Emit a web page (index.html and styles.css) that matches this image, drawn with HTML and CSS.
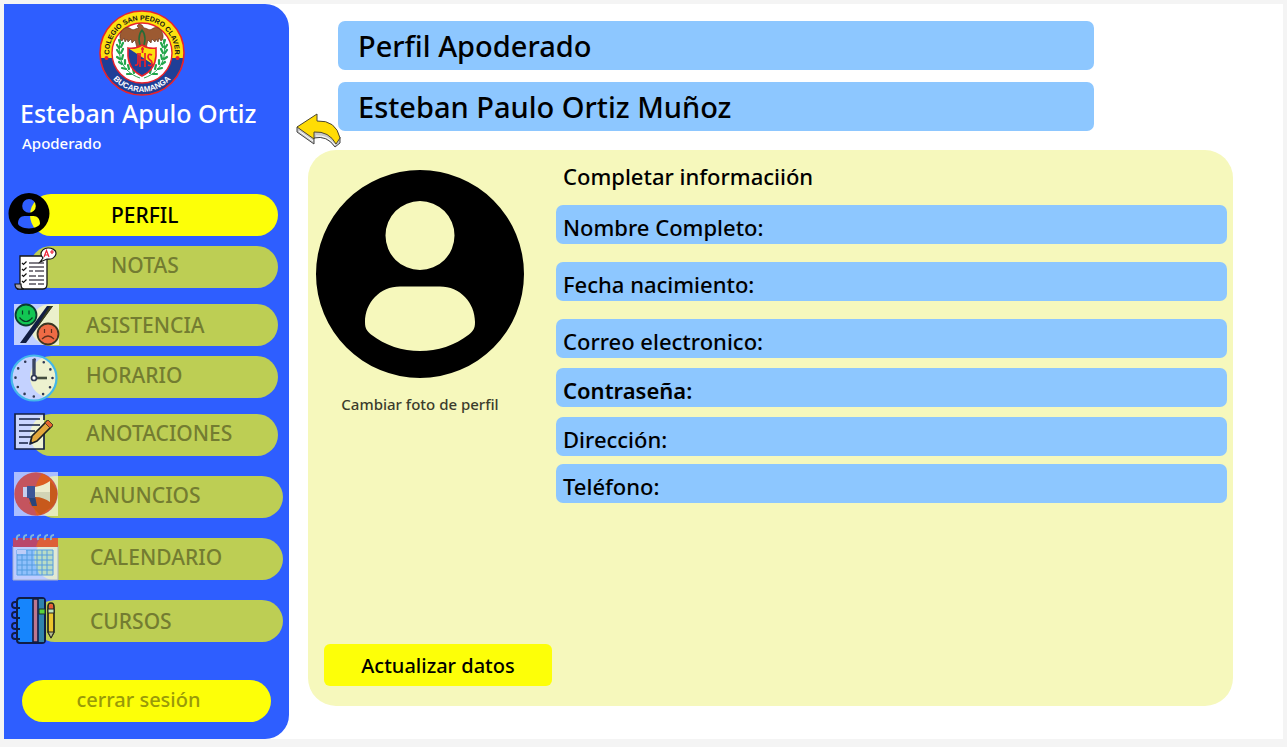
FILE: index.html
```html
<!DOCTYPE html>
<html lang="es">
<head>
<meta charset="utf-8">
<meta name="viewport" content="width=device-width, initial-scale=1">
<title>Perfil Apoderado</title>
<link rel="stylesheet" href="styles.css">
</head>
<body>
<div class="sheet">
  <aside class="sidebar">
    <svg class="crest" viewBox="0 0 86 86" role="img" aria-label="Colegio San Pedro Claver">
      <circle cx="43" cy="43" r="42" fill="#fde00f"/>
      <path d="M1.300 48A42 42 0 0 0 84.700 48z" fill="#1f3f97"/>
      <circle cx="43" cy="43" r="42" fill="none" stroke="#e9222b" stroke-width="1.6"/>
      <circle cx="43" cy="43" r="30" fill="#fff" stroke="#e9222b" stroke-width="1.4"/>
      <circle cx="7.500" cy="48" r="2" fill="#e9222b"/><circle cx="78.500" cy="48" r="2" fill="#e9222b"/>
      <path id="arc-top" d="M11.200 51a32.800 32.800 0 1 1 63.600 0" fill="none"/>
      <path id="arc-bottom" d="M4 43a39 39 0 0 0 78 0" fill="none"/>
      <text class="crest-top"><textPath href="#arc-top" startOffset="50%">COLEGIO SAN PEDRO CLAVER</textPath></text>
      <text class="crest-bottom"><textPath href="#arc-bottom" startOffset="50%">BUCARAMANGA</textPath></text>
      <g fill="none" stroke="#22a64b" stroke-width="1">
        <path d="M22 29C17 45 23 62 41 68M64 29C69 45 63 62 45 68"/>
        <path stroke-width="2.200" stroke-linecap="round" d="M21 33l-1-3M20 38l-2-3M20 43l-2-3M21 49l-3-2M23 54l-3-2M27 59l-4-1M32 64l-4 0M22 37l2-4M22 43l2-4M23 49l1-4M26 54l0-4M30 59l-1-4M35 63l-1-4M65 33l1-3M66 38l2-3M66 43l2-3M65 49l3-2M63 54l3-2M59 59l4-1M54 64l4 0M64 37l-2-4M64 43l-2-4M63 49l-1-4M60 54l0-4M56 59l1-4M51 63l1-4"/>
      </g>
      <path d="M40 18c-3 0-5 3-8 1-4-3-8-1-10 3-2 4-1 8 1 9l2-3 1 4 2-3 1 3 3-3 1 4 3-3 2 8h9l2-8 3 3 1-4 3 3 1-3 2 3 1-4 2 3c2-1 3-5 1-9-2-4-6-6-10-3-3 2-5-1-8-1l-2-3-3-1-2 2z" fill="#9c5a32" stroke="#5b2e1a" stroke-width=".6"/>
      <path d="M43 20c-4 5-4 13 0 18 4-5 4-13 0-18z" fill="none" stroke="#256c37" stroke-width="1.500"/>
      <path d="M29 38q8 1 14-3 6 4 14 3v8q-1 14-14 20-13-6-14-20z" fill="#fde00f"/>
      <path d="M29 38l26 17q-4 8-12 11-13-6-14-20z" fill="#1f3f97"/>
      <path d="M29 38q8 1 14-3 6 4 14 3v8q-1 14-14 20-13-6-14-20z" fill="none" stroke="#e9222b" stroke-width="1.600"/>
      <path d="M39 43v9q0 4-3 3M41 43v14M41 50h5M46 43v14M43.500 37v6M42 39h3M53 45q-4-2-4 2 0 2 2 3t2 3q0 4-4 2" fill="none" stroke="#e9222b" stroke-width="1.700"/>
    </svg>
    <p class="user-name">Esteban Apulo Ortiz</p>
    <p class="user-role">Apoderado</p>

    <nav aria-label="Principal">
      <ul class="menu">
        <li class="item item-short">
          <a class="pill pill-active pill-centered" href="#perfil" aria-current="page">PERFIL</a>
          <svg class="icon" viewBox="0 1 48 48" aria-hidden="true"><path fill-rule="evenodd" d="M23 4a20.500 20.500 0 1 0 0 41 20.500 20.500 0 0 0 0-41zM23 10.100a6.800 6.800 0 1 1 0 13.600 6.800 6.800 0 0 1 0-13.600zM18.500 27h9c4 0 6.500 3 6.500 7.500 0 2-5 5-11 5s-11-3-11-5c0-4.500 2.500-7.500 6.500-7.500z"/></svg>
        </li>
        <li class="item item-short">
          <a class="pill" href="#notas">NOTAS</a>
          <svg class="icon" viewBox="-1 -6 48 48" aria-hidden="true">
            <path d="M13 11h27v28q0 5-4 5H10q3-1 3-5z" transform="translate(0 -3)" fill="#fff" stroke="#151515" stroke-width="1.300"/>
            <path d="M8 36h6q0 5 3 5h-5q-4 0-4-5z" fill="#a8a5ae" stroke="#151515" stroke-width="1.200"/>
            <path d="M22 15h15M22 19h15M22 23h4M28 23h9M22 28h7M31 28h6M22 32h15M22 36h7M31 36h6" stroke="#55525c" stroke-width="1.300"/>
            <path d="M15 15l1.500 1.500 3-3M15 21l1.500 1.500 3-3M15 27l1.500 1.500 3-3M15 33l1.500 1.500 3-3" fill="none" stroke="#111" stroke-width="1.200"/>
            <path d="M36 10l-3 4 7-3c5 1 9-2 9-6 0-3-4-5-8-5s-7 3-7 6q0 2 2 4z" fill="#fff" stroke="#151515" stroke-width="1.200"/>
            <path d="M37 9l2.500-6.500L42 9M38 7h3M43 4h4M45 2v4" fill="none" stroke="#ee2236" stroke-width="1.200"/>
          </svg>
        </li>
        <li class="item gap-medium">
          <a class="pill pill-centered" href="#asistencia">ASISTENCIA</a>
          <svg class="icon" viewBox="-3 -1 48 48" aria-hidden="true">
            <path fill="#fff" opacity=".7" d="M5 3h45v41H5z"/>
            <path d="M11 42L38 5h6L17 42z" fill="#111d42"/>
            <path d="M27 27L41 5h3L28 27z" fill="#383d1b"/>
            <circle cx="17" cy="14" r="10.500" fill="#12c653" stroke="#0b3d30" stroke-width="1.800"/>
            <path d="M13.500 9.500v4M20 9.500v4M10.500 16.500q6.500 8 13 0" fill="none" stroke="#073d25" stroke-width="1.200"/>
            <circle cx="39" cy="33" r="10.500" fill="#ef6b45" stroke="#3b3522" stroke-width="1.800"/>
            <path d="M35.500 28v4M42.500 28v4M33 38q6-6 12 0" fill="none" stroke="#61301e" stroke-width="1.200"/>
          </svg>
        </li>
        <li class="item gap-small">
          <a class="pill" href="#horario">HORARIO</a>
          <svg class="icon" viewBox="-3 -1 48 48" aria-hidden="true">
            <circle cx="25" cy="25" r="22.500" fill="#fff" fill-opacity=".72" stroke="#44b7ea" stroke-width="2.200"/>
            <circle cx="25" cy="25" r="18.500" fill="none" stroke="#303853" stroke-width="2.600" stroke-linecap="round" stroke-dasharray="0 9.687"/>
            <path d="M25 6v17" stroke="#3b4663" stroke-width="3.400"/>
            <path d="M27 25h11" stroke="#454d3e" stroke-width="2.600"/>
            <circle cx="25" cy="25" r="2.500" fill="#fff" stroke="#303853" stroke-width="1.700"/>
          </svg>
        </li>
        <li class="item gap-medium">
          <a class="pill" href="#anotaciones">ANOTACIONES</a>
          <svg class="icon" viewBox="-3 -2 48 48" aria-hidden="true">
            <path d="M6 2h29v35H6z" fill="#fff" fill-opacity=".75"/>
            <path d="M35 22v15H6V2h29v6" fill="none" stroke="#142044" stroke-width="1.700"/>
            <path d="M10 7h21M10 13h21M10 19h16M10 25h12M10 31h9" stroke="#142044" stroke-width="1.700"/>
            <path d="M23 24L38 9l5 5-15 15-7 3z" fill="#e3a83d" stroke="#1e2021" stroke-width="1.700" stroke-linejoin="round"/>
            <path d="M36 11l3-3 5 5-3 3z" fill="#e6642f" stroke="#553d24"/><path d="M21 32l1-3 2 2z" fill="#142044"/>
          </svg>
        </li>
        <li class="item item-long gap-large">
          <a class="pill" href="#anuncios">ANUNCIOS</a>
          <svg class="icon" viewBox="0 0 48 48" aria-hidden="true">
            <path fill="#fff" opacity=".6" d="M5 0h44v44H5z"/>
            <circle cx="27" cy="22" r="21.700" fill="#c4545e"/>
            <path d="M33 1.500a21.700 21.700 0 0 1-5 42c-6-10-4-30 5-42z" fill="#dc5e22"/>
            <path d="M42 10l6 8q1 10-4 16L31 43l-11-12z" fill="#c7591c"/>
            <path d="M19 24h7l2 10h-5z" fill="#27457a"/>
            <path d="M14 15h6v10h-6z" fill="#c5cfee"/><path d="M18 14h8v12h-8z" fill="#3c5697"/>
            <path d="M26 15c6-1 11-3 15-6v11H26z" fill="#ececcd"/><path d="M26 20h15v10c-4-3-9-5-15-5z" fill="#d2d4b6"/>
          </svg>
        </li>
        <li class="item item-long gap-large">
          <a class="pill" href="#calendario">CALENDARIO</a>
          <svg class="icon" viewBox="0 -3 48 48" aria-hidden="true">
            <path d="M4 9h45v34H4z" fill="#eef2ff" fill-opacity=".75" stroke="#a5aecd"/>
            <path d="M4 1h45v9H4z" fill="#b9476d"/><path d="M31 1h18v9H27q1-5 4-9z" fill="#dd5f37"/>
            <path d="M8 13h36v25H8z" fill="#8fc0fb"/><path d="M26 13h18v25H31q-8-12-5-25z" fill="#b9dcc6"/>
            <path d="M8 13h36v25H8zM8 18h36M8 23h36M8 28h36M8 33h36M13 13v25M18 13v25M23 13v25M28 13v25M33 13v25M38 13v25" fill="none" stroke="#559ce0" stroke-width="1"/>
            <path d="M8 13h9v4H8z" fill="#bdcdf8"/>
            <path d="M8 3q-1-5 3-5M15 3q-1-5 3-5M22 3q-1-5 3-5M29 3q-1-5 3-5M36 3q-1-5 3-5M42 3q-1-5 3-5" fill="none" stroke="#80b6dc" stroke-width="2"/>
          </svg>
        </li>
        <li class="item item-long gap-large">
          <a class="pill pill-centered" href="#cursos">CURSOS</a>
          <svg class="icon" viewBox="-1 -5 48 48" aria-hidden="true">
            <path d="M10-3h22q3 0 3 3v39q0 3-3 3H10q-3 0-3-3V0q0-3 3-3z" fill="#1685fc" stroke="#101d45" stroke-width="2"/>
            <path d="M29-2h5v43h-5z" fill="#2f83ad"/>
            <path d="M23-2h5v43h-5z" fill="#bc7790" stroke="#101d45" stroke-width="1.600"/>
            <path d="M29 8h6v5h-6z" fill="#58d33c" stroke="#1c3428"/>
            <path d="M10 7H5q-3 0-3-3t3-3h2M10 17H5q-3 0-3-3t3-3h2M10 28H5q-3 0-3-3t3-3h2M10 38H5q-3 0-3-3t3-3h2" fill="none" stroke="#101d45" stroke-width="1.900"/>
            <path d="M38 6q0-4 3-4t3 4v25l-3 5-3-5z" fill="#edc52d" stroke="#24251f" stroke-width="1.700"/>
            <path d="M39 8V5q0-2 2-2t2 2v3z" fill="#e95b38"/><path d="M38 8h6v4h-6z" fill="#bde3bd" stroke="#24251f"/>
            <path d="M38 31h6l-3 6z" fill="#b8bd8b" stroke="#24251f"/>
          </svg>
        </li>
      </ul>
    </nav>
    <button class="logout" type="button">cerrar sesión</button>
  </aside>

  <main class="content">
    <header class="headings">
      <h1 class="banner">Perfil Apoderado</h1>
      <h2 class="banner">Esteban Paulo Ortiz Muñoz</h2>
      <button class="back" type="button" aria-label="Volver">
        <svg viewBox="0 0 46 36" aria-hidden="true">
          <path d="M1 14v5l17 12v-6q13-3 21 9l5-4v-6L20 12z" fill="#c9c9c9" stroke="#444" stroke-width="1"/>
          <path d="M3 18l14 10M20 23q12-1 19 9" fill="none" stroke="#fff" stroke-width="1"/>
          <path d="M1 14L21 1v7q19-1 23 17l-4 6Q33 18 18 19v7z" fill="#ffdc05" stroke="#4c4630" stroke-width="1" stroke-linejoin="round"/>
        </svg>
      </button>
    </header>

    <form class="panel">
      <div class="photo">
        <svg class="avatar" viewBox="0 0 208 208" role="img" aria-label="Foto de perfil"><path fill-rule="evenodd" d="M104 0a104 104 0 1 0 0 208 104 104 0 0 0 0-208zM104 31a34.500 34.500 0 1 1 0 69 34.500 34.500 0 0 1 0-69zM84 116.500h40c20 0 35 16 35 35.500 0 7-2 9-6 12.500-28 22-70 22-98 0-4-3.500-6-5.500-6-12.500 0-19.500 15-35.500 35-35.500z"/></svg>
        <button class="change-photo" type="button">Cambiar foto de perfil</button>
        <button class="update" type="submit">Actualizar datos</button>
      </div>
      <fieldset class="fields">
        <legend class="legend">Completar informaciión</legend>
        <div class="field"><label for="nombre">Nombre Completo:</label><input id="nombre" type="text"></div>
        <div class="field space-large"><label for="fecha">Fecha nacimiento:</label><input id="fecha" type="text"></div>
        <div class="field space-large"><label for="correo">Correo electronico:</label><input id="correo" type="email"></div>
        <div class="field field-strong"><label for="clave">Contraseña:</label><input id="clave" type="password"></div>
        <div class="field"><label for="direccion">Dirección:</label><input id="direccion" type="text"></div>
        <div class="field space-small"><label for="telefono">Teléfono:</label><input id="telefono" type="tel"></div>
      </fieldset>
    </form>
  </main>
</div>
</body>
</html>
```
FILE: styles.css
```css
* { box-sizing: border-box; }

body {
  margin: 0;
  padding: 4px 4px 8px;
  background: #f4f4f4;
  color: #000;
  font-family: "Noto Sans", "Open Sans", sans-serif;
  font-weight: 500;
}

button, input { font: inherit; color: inherit; border: 0; padding: 0; background: none; }
button { cursor: pointer; }
p, h1, h2, ul { margin: 0; padding: 0; }

.sheet {
  display: flex;
  min-height: calc(100vh - 12px);
  background: #fff;
}

/* Sidebar */
.sidebar {
  display: flex;
  flex: none;
  flex-direction: column;
  width: 285px;
  padding: 6px 0 17px;
  border-radius: 0 24px 24px 0;
  background: #2e5eff;
}

.crest { display: block; width: 86px; height: 86px; margin-left: 95px; }
.crest text { font-family: "Liberation Sans Narrow", "Liberation Sans", sans-serif; font-weight: 700; text-anchor: middle; }
.crest .crest-top { font-size: 7px; fill: #111; }
.crest .crest-bottom { font-size: 8px; fill: #fff; }

.user-name { padding-left: 16px; color: #fff; font-size: 25px; line-height: 34px; }
.user-role { padding-left: 18px; color: #fff; font-size: 15px; line-height: 26px; }

.menu { margin-top: 38px; list-style: none; }
.item { position: relative; margin: 10px 11px 0 26px; }
.item:first-child { margin-top: 0; }
.item-long { margin-left: 30px; margin-right: 6px; }
.gap-small { margin-top: 10px; }
.gap-medium { margin-top: 16px; }
.gap-large { margin-top: 20px; }

.pill {
  display: block;
  height: 42px;
  padding-left: 56px;
  border-radius: 21px;
  background: #bdce54;
  color: #737c31;
  font-size: 21px;
  line-height: 38px;
  text-decoration: none;
}
.item-short .pill { padding-left: 81px; }
.pill-active { background: #fdff08; color: #000; }
.pill-centered { line-height: 43px; }

.icon {
  position: absolute;
  top: -4px;
  left: -24px;
  width: 48px;
  height: 48px;
  overflow: visible;
  pointer-events: none;
}
.item-long .icon { left: -25px; }

.logout {
  height: 42px;
  margin: auto 18px 0;
  padding: 0 16px 4px 0;
  border-radius: 21px;
  background: #fdff08;
  color: #999a08;
  font-size: 20px;
}

/* Main column */
.content {
  display: flex;
  flex: 1;
  flex-direction: column;
  min-width: 0;
  padding: 17px 50px 33px 19px;
}

.headings {
  position: relative;
  display: grid;
  gap: 12px;
  margin: 0 139px 19px 30px;
}

.banner {
  padding: 0 20px;
  border-radius: 7px;
  background: #8dc7ff;
  font-size: 29px;
  font-weight: 500;
  line-height: 49px;
}

.back { position: absolute; bottom: -18px; left: -42px; width: 46px; height: 36px; }
.back svg { display: block; width: 46px; height: 36px; }

.panel {
  display: grid;
  flex: 1;
  grid-template-columns: 240px 1fr;
  padding: 10px 6px 20px 8px;
  border-radius: 28px;
  background: #f6f8bc;
}

.photo { display: flex; flex-direction: column; padding-top: 10px; }
.avatar { width: 208px; height: 208px; }
.change-photo { width: 208px; margin-top: 16px; color: #3b3c2c; font-size: 15px; line-height: 20px; }
.update {
  height: 42px;
  margin: auto 4px 0 8px;
  border-radius: 6px;
  background: #fdff08;
  font-size: 20px;
}

.fields { min-width: 0; margin: 0; padding: 0; border: 0; }
.legend { padding: 0 7px; margin-bottom: 12px; font-size: 22px; line-height: 33px; }
.field {
  display: flex;
  gap: 8px;
  align-items: center;
  height: 39px;
  margin-top: 10px;
  padding: 4px 7px 0;
  border-radius: 7px;
  background: #8dc7ff;
  font-size: 22px;
}
.legend + .field { margin-top: 0; }
.field input { flex: 1; min-width: 0; outline: 0; }
.field-strong { font-weight: 600; }
.space-large { margin-top: 18px; }
.space-small { margin-top: 8px; }
```
